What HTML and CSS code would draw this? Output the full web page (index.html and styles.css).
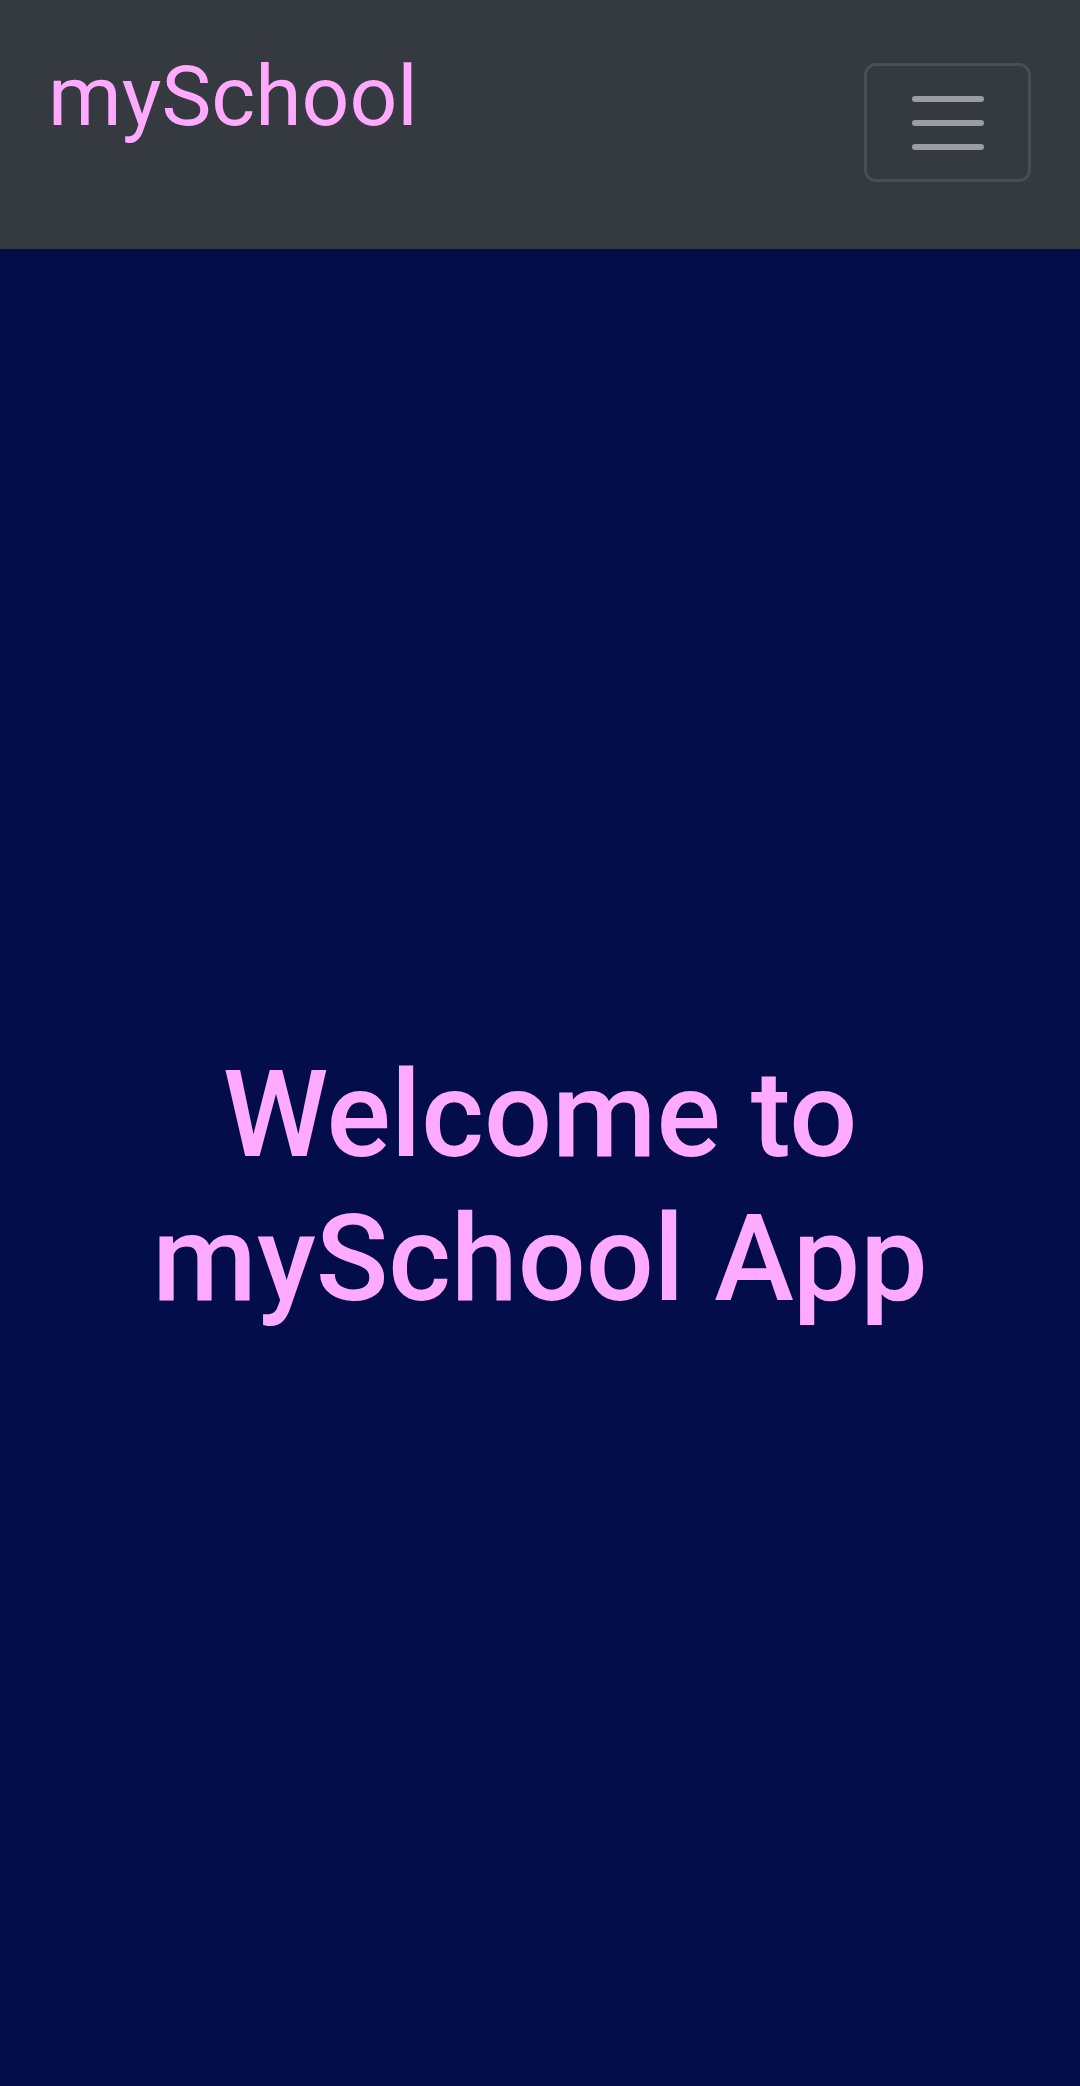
FILE: index.html
```html
<!DOCTYPE html>
<html lang="en">
<head>
<meta charset="utf-8">
<title>mySchool</title>
<link rel="stylesheet" href="styles.css">
</head>
<body>
<nav class="navbar">
  <a class="brand" href="#">mySchool</a>
  <button class="toggler" type="button" aria-label="Toggle navigation">
    <span class="bar"></span>
    <span class="bar"></span>
    <span class="bar"></span>
  </button>
</nav>
<main class="hero">
  <h1 class="title">Welcome to mySchool App</h1>
</main>
</body>
</html>
```
FILE: styles.css
```css
* { box-sizing: border-box; }
html, body {
  margin: 0;
  padding: 0;
  height: 100%;
}
body {
  font-family: Roboto, "Liberation Sans", Arial, sans-serif;
  background: #020d4a;
  display: flex;
  flex-direction: column;
}
.navbar {
  height: 249px;
  flex: 0 0 249px;
  background: #343a40;
  display: flex;
  justify-content: space-between;
  align-items: flex-start;
  padding: 47px 49px 0 48px;
}
.brand {
  font-size: 84px;
  line-height: 1.2;
  color: #ffa9ff;
  text-decoration: none;
  font-weight: 400;
}
.toggler {
  margin-top: 16px;
  width: 167px;
  height: 119px;
  border: 3px solid #484e54;
  border-radius: 12px;
  background: transparent;
  display: flex;
  flex-direction: column;
  align-items: center;
  justify-content: center;
  gap: 18px;
  padding: 0;
}
.bar {
  display: block;
  width: 72px;
  height: 6px;
  border-radius: 3px;
  background: #9a9ea2;
}
.hero {
  flex: 1;
  display: flex;
  align-items: center;
  justify-content: center;
  padding: 38px 36px 0;
}
.title {
  margin: 0;
  font-size: 120px;
  font-weight: 500;
  line-height: 1.2;
  color: #ffa9ff;
  text-align: center;
}
```
